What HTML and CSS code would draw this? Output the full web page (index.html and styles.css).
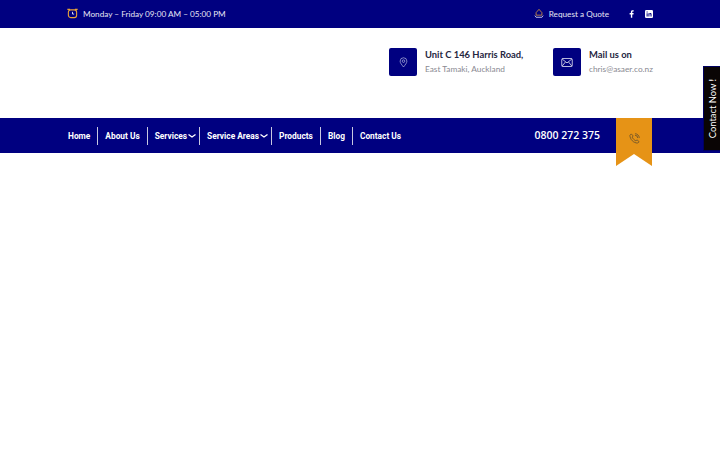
FILE: index.html
```html
<!DOCTYPE html>
<html lang="en">
<head>
<meta charset="utf-8">
<title>Asaer</title>
<link rel="stylesheet" href="styles.css">
</head>
<body>
<div class="topbar">
  <div class="top-item">
    <svg class="top-icon" viewBox="0 0 12 12" width="11" height="11" fill="none" stroke="#e8a33a" stroke-width="1.200"><rect x="1.500" y="2" width="9" height="8.500" rx="2.500"/><path d="M6 4.200v2.400h1.800" stroke="#fff" stroke-width=".9"/><path d="M.4 1.500h3M8.600 1.500h3"/></svg>
    <span>Monday – Friday 09:00 AM – 05:00 PM</span>
  </div>
  <div class="top-right">
    <svg class="quote-icon" viewBox="0 0 12 12" width="10" height="11" fill="none" stroke="#e8a33a" stroke-width=".9"><path d="M6 1 2.500 5v3h7V5z"/><path d="M1 8.500 2.500 10.500h7L11 8.500" stroke="#fff"/></svg>
    <span class="quote">Request a Quote</span>
    <svg class="social-f" viewBox="0 0 8 12" width="5" height="8" fill="#fff"><path d="M5.200 12V6.600h1.900l.3-2.200H5.200V3c0-.6.2-1 1.100-1h1.200V.1C7.200.1 6.600 0 5.800 0 4.100 0 3 1 3 2.800v1.600H1v2.200h2V12z"/></svg>
    <svg class="social-in" viewBox="0 0 10 10" width="8" height="8"><rect width="10" height="10" rx="1.500" fill="#fff"/><path d="M2 4h1.300v4H2zM2 2h1.300v1.200H2zM4.300 4h1.200v.6c.3-.4.700-.7 1.300-.7 1 0 1.400.7 1.400 1.700V8H6.900V5.900c0-.5-.2-.9-.7-.9s-.7.4-.7.900V8H4.300z" fill="#000080"/></svg>
  </div>
</div>

<header class="masthead">
  <div class="info info-address">
    <div class="info-box">
      <svg viewBox="0 0 12 14" width="9" height="11" fill="none" stroke="#d5d8ee" stroke-width=".8"><path d="M6 13C3.500 9.800 1.500 7.600 1.500 5.200a4.500 4.500 0 0 1 9 0C10.500 7.600 8.500 9.800 6 13z"/><circle cx="6" cy="5.200" r="1.700"/></svg>
    </div>
    <div class="info-text">
      <div class="info-title">Unit C 146 Harris Road,</div>
      <div class="info-sub">East Tamaki, Auckland</div>
    </div>
  </div>
  <div class="info info-mail">
    <div class="info-box">
      <svg viewBox="0 0 14 11" width="12" height="9" fill="none" stroke="#fff" stroke-width=".9"><rect x=".6" y=".6" width="12.800" height="9.800" rx="1.200"/><path d="M1 1.200 7 6l6-4.800M1 10l4-5M13 10 9 5"/></svg>
    </div>
    <div class="info-text">
      <div class="info-title">Mail us on</div>
      <div class="info-sub">chris@asaer.co.nz</div>
    </div>
  </div>
</header>

<nav class="navbar">
  <ul class="menu">
    <li class="menu-item first">Home</li>
    <li class="menu-item">About Us</li>
    <li class="menu-item has-sub">Services<svg class="chev" viewBox="0 0 8 4" width="8" height="4" fill="none" stroke="#fff" stroke-width="1.300"><path d="M.5.500 4 3l3.500-2.500"/></svg></li>
    <li class="menu-item has-sub">Service Areas<svg class="chev" viewBox="0 0 8 4" width="8" height="4" fill="none" stroke="#fff" stroke-width="1.300"><path d="M.5.500 4 3l3.500-2.500"/></svg></li>
    <li class="menu-item">Products</li>
    <li class="menu-item">Blog</li>
    <li class="menu-item last">Contact Us</li>
  </ul>
  <div class="phone">0800 272 375</div>
  <div class="ribbon">
    <svg viewBox="0 0 12 12" width="11" height="11" fill="none" stroke="#5a4a30" stroke-width=".8"><path d="M2.500 1 1 2.500C1 7 5 11 9.500 11L11 9.500 8.800 7.500 7.500 8.500C6 8 4 6 3.500 4.500L4.500 3.200z"/><path d="M6.500 2.500a3 3 0 0 1 3 3M6.500.8a4.700 4.700 0 0 1 4.700 4.700"/></svg>
  </div>
</nav>

<aside class="contact-tab"><span>Contact Now !</span></aside>
</body>
</html>
```

FILE: styles.css
```css
* { box-sizing: border-box; }
html, body { margin: 0; padding: 0; }
body {
  width: 720px;
  height: 450px;
  overflow: hidden;
  background: #fff;
  font-family: "Lato", sans-serif;
  position: relative;
}
.topbar {
  height: 28px;
  background: #000080;
  color: #e6e6f4;
  display: flex;
  justify-content: space-between;
  align-items: center;
  padding: 0 67px;
  font-family: "Lato", sans-serif;
  font-size: 8.2px;
}
.top-item, .top-right { display: flex; align-items: center; }
.top-icon { margin-right: 5px; margin-top: -2px; }
.quote-icon { margin-right: 5px; margin-top: -2px; }
.quote { margin-right: 20px; }
.social-f { margin-right: 11px; }
.masthead {
  height: 90px;
  display: flex;
  justify-content: flex-end;
  padding: 20px 68px 0 0;
  gap: 30px;
}
.info { display: flex; gap: 8px; }
.info-mail { width: 99px; }
.info-address { width: 134px; }
.info-box {
  width: 28px;
  height: 28px;
  flex: none;
  background: #000080;
  border-radius: 2px;
  display: flex;
  align-items: center;
  justify-content: center;
}
.info-text { white-space: nowrap; }
.info-title {
  font-family: "Lato", sans-serif;
  font-weight: 700;
  font-size: 9.4px;
  line-height: 14px;
  color: #26263f;
}
.info-sub {
  font-size: 8.3px;
  line-height: 13px;
  margin-top: 1px;
  color: #8a8a92;
  font-family: "Lato", sans-serif;
}
.navbar {
  height: 35px;
  background: #000080;
  display: flex;
  align-items: flex-start;
  padding: 0 68px;
}
.menu {
  list-style: none;
  margin: 9px 0 0;
  padding: 0;
  display: flex;
  flex: 1;
  color: #fff;
  font-family: "Roboto", sans-serif;
  font-weight: 700;
  font-size: 8.35px;
}
.menu-item {
  height: 18px;
  line-height: 18px;
  padding: 0 7px;
  border-right: 1px solid #c8c8e0;
  white-space: nowrap;
  display: flex;
  align-items: center;
}
.menu-item.first { padding-left: 0; }
.menu-item.last { border-right: 0; }
.has-sub { padding-right: 3px; }
.chev { margin: 0 0 0 1px; }
.phone {
  color: #fff;
  font-family: "Open Sans", sans-serif;
  font-weight: 600;
  font-size: 10.5px;
  line-height: 16px;
  margin: 9px 16px 0 0;
  white-space: nowrap;
}
.ribbon {
  width: 36px;
  height: 48px;
  flex: none;
  background: #e69316;
  clip-path: polygon(0 0, 100% 0, 100% 100%, 50% 75%, 0 100%);
  display: flex;
  justify-content: center;
  padding-top: 15px;
}
.contact-tab {
  position: absolute;
  top: 66px;
  left: 703px;
  width: 17px;
  height: 85px;
  background: #0a0505;
  border: 1px solid #000060;
  border-right: 0;
  display: flex;
  align-items: center;
  justify-content: center;
}
.contact-tab span {
  writing-mode: vertical-rl;
  transform: rotate(180deg);
  color: #fff;
  font-family: "Lato", sans-serif;
  font-size: 9.4px;
  white-space: nowrap;
}
```
